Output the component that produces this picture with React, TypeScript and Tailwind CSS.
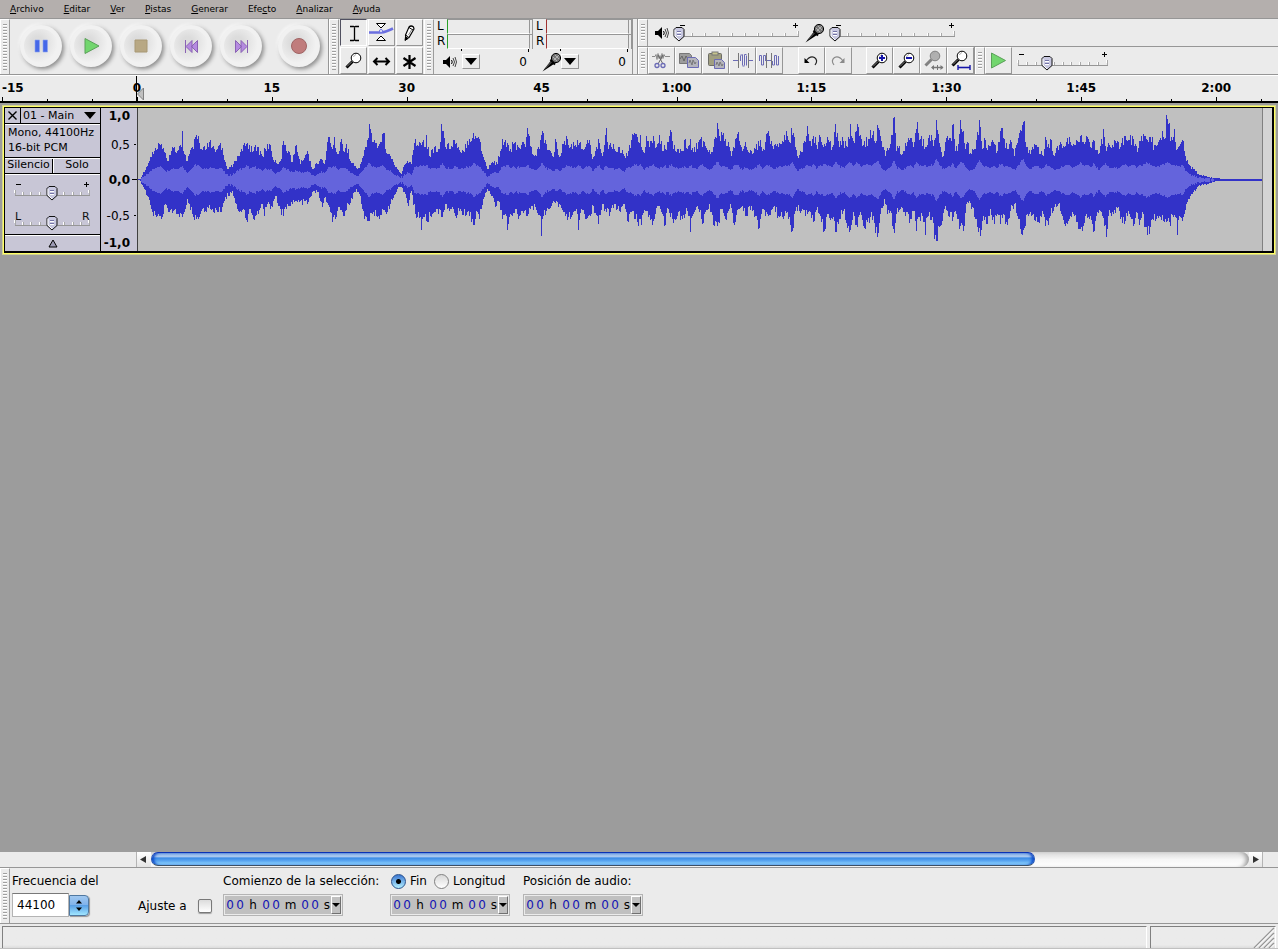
import type { ReactNode } from "react";

type Point = [number, number];

// Peak envelopes, three units per screen column, measured from the top of the strip at -24
const peaksTop: { start: number; points: Point[] }[] = [
  {
    start: -24,
    points: [
      [30, 236], [50, 195], [67, 155], [78, 148], [93, 130], [110, 180], [125, 140], [140, 150], [152, 140], [157, 90], [160, 150],
      [170, 180], [185, 140], [203, 105], [209, 145], [225, 148], [238, 125], [255, 155], [270, 127], [285, 185], [295, 205], [310, 190],
      [330, 155], [352, 127], [370, 150], [380, 140], [395, 165], [405, 145], [417, 130], [433, 185], [450, 180], [460, 120],
      [475, 150], [487, 185], [499, 132], [510, 190], [530, 150], [545, 205], [560, 190], [572, 175], [583, 190], [595, 110],
      [605, 145], [613, 108], [622, 160], [633, 115], [640, 150], [647, 130], [660, 180], [680, 205], [690, 190], [705, 140],
      [715, 112], [718, 69], [723, 97], [730, 125], [745, 135], [760, 97], [770, 160], [785, 175], [800, 205], [812, 220], [820, 200],
      [832, 180], [842, 190], [855, 115], [865, 135], [878, 118], [886, 140], [889, 102], [898, 165], [915, 135], [920, 155], [931, 125], [934, 69],
      [940, 92], [947, 145], [970, 118], [985, 140], [1000, 150], [1010, 120], [1030, 97], [1040, 112], [1050, 125],
      [1060, 170], [1070, 205], [1085, 185], [1100, 190], [1115, 115], [1125, 118],
    ],
  },
  {
    start: 1116,
    points: [
      [0, 145], [10, 130], [25, 140], [35, 125], [45, 140], [52, 82], [58, 105], [65, 160], [78, 165], [85, 140], [94, 102],
      [100, 97], [108, 130], [120, 150], [128, 170], [136, 115], [146, 170], [158, 130], [170, 115], [180, 140], [190, 125],
      [202, 118], [215, 145], [237, 118], [247, 175], [255, 150], [265, 115], [275, 165], [289, 82], [295, 145], [300, 127],
      [315, 150], [327, 140], [342, 165], [355, 150], [367, 100], [380, 110], [390, 102], [400, 155], [408, 105], [418, 140],
      [430, 105], [438, 140], [448, 103], [460, 150], [470, 125], [483, 95], [490, 145], [515, 150], [523, 118], [532, 145],
      [541, 115], [550, 155], [568, 118], [582, 125], [595, 155], [605, 155], [612, 115], [619, 112], [622, 66], [628, 105], [634, 94],
      [645, 115], [655, 125], [662, 165], [675, 115], [685, 94], [692, 140], [705, 125], [715, 155], [725, 160], [735, 145],
      [750, 118], [758, 145], [772, 98], [785, 135], [800, 130], [815, 120], [829, 90], [837, 125], [844, 82], [852, 110],
      [862, 165], [875, 155], [890, 76], [898, 120], [915, 110], [920, 145], [928, 103], [940, 140], [952, 108], [965, 140],
      [976, 69], [985, 120], [1000, 120], [1010, 140], [1019, 69], [1028, 120], [1038, 90], [1045, 79], [1055, 135],
      [1075, 115], [1090, 90], [1097, 120], [1102, 72], [1112, 120], [1125, 165],
    ],
  },
  {
    start: 2256,
    points: [
      [0, 130], [8, 52], [13, 48], [18, 150], [28, 135], [35, 160], [50, 125], [60, 112], [68, 140], [80, 64], [88, 118],
      [98, 115], [106, 140], [115, 112], [125, 118], [134, 112], [139, 58], [145, 100], [150, 140], [160, 165], [167, 112], [180, 112],
      [188, 69], [195, 150], [203, 130], [211, 58], [218, 90], [225, 145], [230, 125], [240, 158], [255, 145], [262, 95], [268, 58],
      [275, 145], [283, 112], [290, 148], [305, 118], [320, 150], [335, 82], [343, 115], [352, 145], [361, 118], [373, 165],
      [385, 112], [395, 72], [402, 60], [408, 140], [420, 160], [433, 130], [445, 140], [458, 165], [464, 108], [475, 130],
      [482, 118], [492, 165], [510, 125], [525, 135], [537, 108], [545, 135], [560, 120], [574, 102], [580, 125], [590, 108],
      [600, 140], [608, 118], [625, 160], [634, 115], [637, 130], [640, 84], [645, 135], [660, 140], [672, 118], [690, 140], [695, 112],
      [708, 118], [730, 115], [740, 155], [752, 106], [770, 118], [785, 110], [790, 148], [805, 125], [817, 92], [824, 112],
      [829, 42], [836, 68], [841, 120], [853, 85], [858, 148], [870, 130], [878, 120], [885, 165], [900, 195], [910, 205],
      [925, 220], [950, 228], [970, 232], [1005, 235], [1010, 237], [1120, 237],
    ],
  },
];

const peaksBottom: { start: number; points: Point[] }[] = [
  {
    start: -24,
    points: [
      [30, 240], [50, 285], [67, 335], [78, 348], [93, 355], [105, 310], [115, 335], [130, 330], [147, 350], [160, 340],
      [170, 295], [185, 340], [197, 355], [215, 325], [240, 325], [270, 335], [285, 290], [305, 272], [325, 330], [340, 325],
      [352, 365], [360, 325], [370, 355], [385, 340], [395, 310], [403, 347], [412, 310], [420, 325], [435, 285], [445, 315],
      [458, 347], [470, 310], [500, 305], [535, 305], [550, 272], [565, 275], [575, 320], [585, 290], [600, 335], [607, 365],
      [615, 355], [622, 330], [640, 345], [655, 310], [678, 265], [690, 285], [703, 355], [718, 362], [730, 335], [745, 345],
      [765, 335], [780, 310], [800, 265], [812, 260], [825, 280], [835, 315], [842, 270], [855, 340], [870, 350], [874, 388], [878, 350], [885, 340],
      [889, 362], [905, 340], [920, 325], [935, 350], [945, 310], [960, 325], [975, 345], [990, 325], [1005, 345], [1015, 330],
      [1029, 372], [1040, 335], [1048, 355], [1060, 295], [1072, 265], [1085, 285], [1095, 320], [1105, 300], [1115, 355],
      [1125, 340], [1132, 387],
    ],
  },
  {
    start: 1116,
    points: [
      [0, 340], [15, 325], [25, 355], [35, 330], [50, 345], [60, 325], [75, 320], [90, 345], [94, 407], [100, 345],
      [115, 325], [128, 300], [140, 305], [160, 335], [175, 350], [190, 335], [202, 340], [205, 387], [212, 325], [225, 355], [240, 345],
      [250, 315], [265, 370], [275, 310], [297, 345], [313, 310], [330, 335], [342, 310], [350, 360], [365, 330], [375, 355],
      [392, 372], [405, 330], [415, 350], [428, 362], [440, 315], [452, 335], [466, 372], [475, 325], [490, 368], [500, 345],
      [515, 355], [530, 330], [538, 345], [541, 395], [550, 340], [565, 325], [578, 368], [597, 310], [612, 375], [622, 377], [632, 325],
      [645, 355], [660, 310], [672, 372], [685, 325], [695, 315], [705, 345], [722, 315], [735, 345], [745, 384], [755, 325],
      [775, 345], [790, 320], [805, 345], [820, 355], [832, 335], [847, 392], [858, 320], [872, 330], [890, 340], [912, 362],
      [920, 320], [942, 392], [955, 340], [965, 355], [979, 395], [990, 355], [1000, 330], [1009, 368], [1021, 388],
      [1030, 335], [1042, 380], [1050, 335], [1058, 375], [1072, 365], [1090, 345], [1100, 410], [1110, 340], [1122, 295],
      [1130, 340],
    ],
  },
  {
    start: 2256,
    points: [
      [0, 330], [8, 385], [13, 398], [18, 340], [30, 325], [45, 345], [60, 355], [70, 330], [77, 392], [85, 350], [95, 345],
      [105, 403], [112, 350], [125, 350], [133, 415], [140, 422], [150, 375], [165, 315], [175, 345], [188, 350], [195, 330],
      [207, 384], [222, 375], [230, 305], [245, 320], [255, 355], [270, 407], [278, 345], [292, 370], [300, 325], [312, 370],
      [320, 340], [330, 370], [340, 340], [350, 372], [360, 330], [372, 310], [382, 345], [396, 403], [405, 375], [415, 345],
      [430, 340], [448, 368], [455, 330], [464, 375], [480, 345], [490, 330], [503, 310], [512, 340], [525, 375], [535, 360],
      [545, 335], [560, 365], [567, 385], [575, 390], [585, 345], [600, 345], [611, 392], [620, 335], [635, 345], [647, 410],
      [655, 345], [665, 335], [685, 320], [697, 368], [710, 345], [722, 355], [730, 375], [738, 335], [747, 372], [755, 335],
      [771, 403], [785, 355], [800, 345], [820, 360], [837, 365], [855, 350], [862, 403], [868, 345], [878, 350], [890, 305],
      [905, 280], [925, 255], [950, 250], [970, 243], [1005, 241], [1010, 240], [1120, 240],
    ],
  },
];

const COLUMNS = 1124;
const AXIS = 238;

const noise = (i: number) => {
  const n = Math.sin(i * 12.9898) * 43758.5453;
  return n - Math.floor(n);
};

const buildPeaks = (chunks: { start: number; points: Point[] }[], seed: number) => {
  const points = chunks.flatMap(({ start, points }) =>
    points.map(([x, y]): Point => [Math.round((x + start) / 3), Math.abs(y - AXIS) / 3])
  );
  const out: number[] = [];
  let k = 0;
  for (let x = 0; x < COLUMNS; x++) {
    while (k < points.length - 2 && points[k + 1][0] <= x) k++;
    const [x0, h0] = points[k];
    const [x1, h1] = points[k + 1];
    if (x < x0) {
      out.push(0.5);
      continue;
    }
    const t = x1 === x0 ? 0 : (x - x0) / (x1 - x0);
    const near = h1 > h0 ? t : 1 - t;
    const h = Math.min(h0, h1) + Math.abs(h1 - h0) * Math.pow(near, x1 - x0 > 3 ? 0.9 : 1.3);
    const jitter = t === 0 ? 1 : 1.12 - 0.28 * noise(x + seed);
    out.push(Math.max(0.5, Math.round(h * jitter)));
  }
  return out;
};

const up = buildPeaks(peaksTop, 7);
const down = buildPeaks(peaksBottom, 911);
const rms = up.map((_, i) => {
  let sum = 0;
  let count = 0;
  for (let j = Math.max(0, i - 1); j <= Math.min(COLUMNS - 1, i + 1); j++) {
    sum += up[j] + down[j];
    count += 2;
  }
  const mean = sum / count;
  return mean < 2 ? 0 : Math.round(mean * 0.37 + 2 * noise(i + 33) - 1);
});

const bars = (top: number[], bottom: number[]) =>
  top.map((h, i) => `M${i} ${71.5 - h}h1V${71.5 + bottom[i]}h-1z`).join("");

const peakPath = bars(up, down);
const rmsPath = bars(rms, rms);

const Waveform = () => (
  <svg
    viewBox="0 0 1124 143"
    preserveAspectRatio="none"
    shapeRendering="crispEdges"
    className="block w-full h-full"
    role="img"
    aria-label="Forma de onda 01 - Main"
  >
    <path d={peakPath} fill="#3232c8" />
    <path d={rmsPath} fill="#6464dc" />
  </svg>
);

const Grip = () => (
  <div className="w-[10px] shrink-0 self-stretch border-l border-t border-white border-r border-r-[#9c9c9c] px-[2px] py-1">
    <div className="h-full bg-[repeating-linear-gradient(to_bottom,#a0a0a0_0_1px,#ffffff_1px_2px,#ebebeb_2px_3px)]" />
  </div>
);

const Slider = ({
  label,
  width,
  end,
  steps,
  value,
  marks,
}: {
  label: string;
  width: number;
  end: number;
  steps: number;
  value: number;
  marks?: [string, string];
}) => {
  // Letter marks stand taller than the plus and minus signs
  const head = marks ? 5 : 0;
  return (
    <div className="relative shrink-0" style={{ width }}>
      <svg
        width={width}
        height={20 + head}
        viewBox={`0 ${-head} ${width} ${20 + head}`}
        className="block"
        shapeRendering="crispEdges"
      >
        {marks ? (
          <g fontFamily="DejaVu Sans, sans-serif" fontSize="11" fill="#111">
            <text x="6" y="8">{marks[0]}</text>
            <text x={end - 8} y="8">{marks[1]}</text>
          </g>
        ) : (
          <path d={`M7 2.5h5M${end - 6} 2.5h5M${end - 3.5} 0v5`} stroke="#000" fill="none" />
        )}
        <path d={`M6 13.5H${end}`} stroke="#969696" />
        {Array.from({ length: steps + 1 }, (_, i) => {
          const x = Math.round(6 + ((end - 7) * i) / steps) + 0.5;
          const tall = i === 0 || i === steps;
          return (
            <g key={i}>
              <path d={`M${x - 1} ${tall ? 8 : 10}v3`} stroke="#fff" />
              <path d={`M${x} ${tall ? 8 : 10}v${tall ? 5 : 3}`} stroke="#a8a8a8" />
            </g>
          );
        })}
        <g transform={`translate(${value} 4)`} shapeRendering="auto">
          <path d="M-3 .5h6l2 2v7l-5 4.5-5-4.5v-7z" fill="#c8c8e0" stroke="#111" />
          <path d="M-4 3v6l4 4" stroke="#fff" fill="none" />
          <path d="M-2 4.5h4M-2 7.5h4" stroke="#7474a8" />
          <path d="M-2 5.5h4M-2 8.5h4" stroke="#fff" />
        </g>
      </svg>
      <input
        type="range"
        aria-label={label}
        min={6}
        max={end}
        defaultValue={value}
        className="absolute inset-0 w-full h-full opacity-0"
      />
    </div>
  );
};

const ToolButton = ({ label, pressed, children }: { label: string; pressed?: boolean; children: ReactNode }) => (
  <button
    type="button"
    aria-label={label}
    aria-pressed={pressed}
    className={`w-[27px] h-[27px] shrink-0 border ${
      pressed
        ? "border-t-[#505060] border-l-[#505060] border-r-white border-b-white"
        : "border-t-white border-l-white border-r-[#969696] border-b-[#969696]"
    }`}
  >
    <svg width="25" height="25" viewBox="1 1 25 25" fill="none" stroke="#000">
      {children}
    </svg>
  </button>
);

const Speaker = () => (
  <svg width="14" height="14" viewBox="0 0 14 14" fill="none" stroke="#000">
    <path d="M0 5h3l4-4v12L3 9H0z" fill="#000" stroke="none" />
    <path d="M8.5 5q1.5 2 0 4" />
    <path d="M10 3q3 4 0 8M12 2q3 5 0 10" stroke="#444" />
  </svg>
);

const Mic = () => (
  <svg width="20" height="20" viewBox="0 0 20 20" fill="none">
    <path d="M0.5 19.5 9 8.5 12 12z" fill="#000" />
    <path d="M3 16.5 9.5 10" stroke="#777" />
    <path d="M8.5 7.5l4.5 5" stroke="#000" strokeWidth="2" />
    <circle cx="14" cy="6" r="4.6" fill="#777" stroke="#000" />
    <path d="M11 5l4 4M13 3l4 4M12 8l5-5" stroke="#ccc" strokeWidth=".7" />
  </svg>
);

const Lens = ({ fill = "#fff", stroke = "#000" }: { fill?: string; stroke?: string }) => (
  <>
    <path d="M6.5 20.5 12.5 14.5" stroke={stroke} strokeWidth="3" />
    <path d="M7 19.5 12 14.5" stroke="#888" />
    <circle cx="16" cy="11" r="4.8" fill={fill} stroke={stroke} />
    <path d="M13.5 10q.5-2 2.5-2.5" stroke="#aaa" />
  </>
);

const tools = [
  {
    label: "Selección",
    icon: <path d="M10 7.5h3.5l1 .5 1-.5H19M14.5 8v13M10 21.5h3.5l1-.5 1 .5H19" strokeWidth="1.3" />,
  },
  {
    label: "Envolvente",
    icon: (
      <>
        <path d="M1 13.5h12q5-.5 12-4" stroke="#6b6fe0" strokeWidth="2.6" />
        <path d="M8.5 4.5h9L13 9zM8.5 21.5h9L13 17z" fill="#fff" />
        <circle cx="13" cy="12" r="1.5" fill="#fff" stroke="#6b6fe0" />
      </>
    ),
  },
  {
    label: "Dibujo",
    icon: (
      <>
        <path d="M13 8q2-2 4.5 0l.5 2-5 8.500-3 1.500-.5-4z" fill="#fff" strokeWidth="1.2" />
        <path d="M13 8.500l4 2.500M9.500 16l3 2" />
        <path d="M15.500 11l-3 5" stroke="#888" />
        <path d="M9 21.500l.5-3.500 2.500 1.500z" fill="#000" />
      </>
    ),
  },
  {
    label: "Ampliación",
    icon: <Lens />,
  },
  {
    label: "Desplazamiento",
    icon: <path d="M6 14.5h15M9.5 11L6 14.5 9.5 18M17.5 11l3.5 3.5-3.5 3.5" strokeWidth="2" />,
  },
  {
    label: "Multiherramienta",
    icon: <path d="M13.5 8v14M7.5 11l12 8M19.5 11l-12 8" strokeWidth="2.2" />,
  },
];

const editButtons = [
  {
    label: "Cortar",
    icon: (
      <>
        <path d="M4 9.5h3l1-2 1 5 1-6 1 5 1-3 1 4 1-6 1 5 1-4 1 2h5" stroke="#8a8a8a" />
        <path d="M10 8l5 9M15 8l-5 9" stroke="#666" />
        <circle cx="9" cy="18.5" r="2" stroke="#6b6bb5" strokeWidth="1.3" />
        <circle cx="15" cy="18.5" r="2" stroke="#6b6bb5" strokeWidth="1.3" />
      </>
    ),
  },
  {
    label: "Copiar",
    icon: (
      <>
        <path d="M4.5 6.5h10l2 2v8h-12z" fill="#9c9c9c" stroke="#777" />
        <path d="M5 12l2-3 2 5 2-5 2 3" stroke="#666" />
        <path d="M12.5 10.5h8l3 3v7h-11z" fill="#b4b4bc" stroke="#6b6bb5" />
        <path d="M14 16l1-3 2 5 1-5 2 4 1-2" stroke="#777" />
      </>
    ),
  },
  {
    label: "Pegar",
    icon: (
      <>
        <rect x="6.5" y="6.5" width="13" height="12" rx="1" fill="#a09e80" stroke="#6d6d66" />
        <rect x="10" y="5" width="6" height="3" fill="#c6c48c" stroke="#777" />
        <path d="M12.5 12.5h7l3 3v6h-10z" fill="#b4b4bc" stroke="#6b6bb5" />
        <path d="M14 18l1-3 2 4 1-4 2 4 1-2" stroke="#777" />
      </>
    ),
  },
  {
    label: "Recortar",
    icon: (
      <>
        <path d="M4 13.5h5M19 13.5h5" stroke="#6b6bb5" />
        <path d="M9.5 6v15M19.5 6v15" stroke="#777" />
        <path d="M11.5 14V8.5M13.5 7.5v11M15.5 7.5v11M17.5 8.5v10M11.5 8h2M13.5 19h2M15.5 7.5h2" stroke="#6b6bb5" />
      </>
    ),
  },
  {
    label: "Silenciar",
    icon: (
      <>
        <path d="M3.5 14V8.5h2V18h2V8.5h2V14M16.5 14v4h2V8.5h2V18h2V9" stroke="#6b6bb5" />
        <path d="M10.5 6v15M15.5 6v15" stroke="#777" />
        <path d="M11 13.5h4" stroke="#6b6bb5" />
      </>
    ),
  },
];

const historyButtons = [
  {
    label: "Deshacer",
    icon: (
      <>
        <path d="M8 14q4-5.5 8.5-3.5 4 3 .5 7.5" stroke="#222" strokeWidth="1.2" />
        <path d="M6.5 11v5h5z" fill="#000" stroke="none" />
      </>
    ),
  },
  {
    label: "Rehacer",
    icon: (
      <>
        <path d="M18 14q-4-5.5-8.5-3.5-4 3-.5 7.5" stroke="#8a8a8a" strokeWidth="1.2" />
        <path d="M19.5 11v5h-5z" fill="#8a8a8a" stroke="none" />
      </>
    ),
  },
];

const zoomButtons = [
  {
    label: "Acercar",
    icon: (
      <>
        <Lens />
        <path d="M13 11h6M16 8v6" stroke="#1414a8" strokeWidth="2" />
      </>
    ),
  },
  {
    label: "Alejar",
    icon: (
      <>
        <Lens />
        <path d="M13 11h6" stroke="#1414a8" strokeWidth="2" />
      </>
    ),
  },
  {
    label: "Ajustar selección",
    icon: (
      <>
        <g transform="translate(-1 -2)">
          <Lens fill="#b0b0b0" stroke="#808080" />
        </g>
        <path d="M12 20.5h5M18 20.5h5" stroke="#777" strokeWidth="1.4" />
        <path d="M11 20.5l3-2.5v5zM23.5 20.5l-3-2.5v5z" fill="#777" stroke="none" />
        <path d="M17.5 18v5" stroke="#777" />
      </>
    ),
  },
  {
    label: "Ajustar proyecto",
    icon: (
      <>
        <g transform="translate(-1 -2)">
          <Lens />
        </g>
        <path d="M11 20.5h12" stroke="#1414a8" strokeWidth="1.6" />
        <path d="M11 18v5M23 18v5" stroke="#1414a8" strokeWidth="1.4" />
      </>
    ),
  },
];

const transport = [
  {
    label: "Pausa",
    icon: <path d="M4 4h4.500v12H4zM12 4h4.500v12H12z" fill="#4668e8" stroke="#8fa4f0" strokeWidth=".6" />,
  },
  {
    label: "Reproducir",
    icon: <path d="M4 2.5v15l14-7.5z" fill="#72d66e" stroke="#5aa058" />,
  },
  {
    label: "Parar",
    icon: <path d="M4 4h12v12H4z" fill="#b8a884" stroke="#a89874" />,
  },
  {
    label: "Ir al inicio",
    icon: <path d="M4.5 4v13M11 4.5v12L5 10.5zM16.5 4.5v12l-6-6z" fill="#b58ae0" stroke="#8a62b4" />,
  },
  {
    label: "Ir al final",
    icon: <path d="M16.5 4v13M10 4.5v12l6-6zM4.5 4.5v12l6-6z" fill="#b58ae0" stroke="#8a62b4" />,
  },
  {
    label: "Grabar",
    icon: <circle cx="10" cy="10" r="7.5" fill="#c07c7c" stroke="#a06464" />,
  },
];

const menus = [
  ["", "A", "rchivo"],
  ["", "E", "ditar"],
  ["", "V", "er"],
  ["", "P", "istas"],
  ["", "G", "enerar"],
  ["Efe", "c", "to"],
  ["", "A", "nalizar"],
  ["", "A", "yuda"],
];

const rulerLabels = ["-15", "0", "15", "30", "45", "1:00", "1:15", "1:30", "1:45", "2:00"];

const Meter = ({ label, mark, icon }: { label: string; mark: string; icon: ReactNode }) => (
  <div className="w-[99px] pl-[3px]">
    {["L", "R"].map((channel) => (
      <div key={channel} className="flex h-[15px] leading-[15px]">
        <span className="w-[10px]">{channel}</span>
        <div className={`w-[83px] border-t border-t-[#969696] border-l border-r border-r-[#969696] border-b border-b-white ${mark}`} />
        <div className="w-[3px] border-t border-t-[#969696] border-r border-r-[#969696]" />
      </div>
    ))}
    <div className="flex justify-between h-[3px] pl-[24px] pr-[4px]">
      <span className="w-px h-[2px] bg-black" />
      <span className="w-px bg-black" />
    </div>
    <div className="flex items-center h-[19px] pl-[6px]">
      <div className="w-[19px]">{icon}</div>
      <button
        type="button"
        aria-label={label}
        className="flex items-center justify-center w-[18px] h-[15px] border border-white border-r-[#969696] border-b-[#969696]"
      >
        <svg width="12" height="7" viewBox="0 0 12 7">
          <path d="M0 0h12L6 7z" fill="#000" />
        </svg>
      </button>
      <span className="flex-1 text-right pr-[6px]">0</span>
    </div>
  </div>
);

const TimeField = ({ label }: { label: string }) => (
  <div
    role="group"
    aria-label={label}
    className="flex items-center w-[120px] h-[22px] p-px border border-[#b4b4b4] bg-[#ebebeb]"
  >
    <div className="flex flex-1 items-center h-full bg-[#c0c0c0] text-center">
      <span className="w-[10px] text-[#1414b4]">0</span>
      <span className="w-[10px] text-[#1414b4]">0</span>
      <span className="w-[16px]">h</span>
      <span className="w-[10px] text-[#1414b4]">0</span>
      <span className="w-[10px] text-[#1414b4]">0</span>
      <span className="w-[19px]">m</span>
      <span className="w-[10px] text-[#1414b4]">0</span>
      <span className="w-[10px] text-[#1414b4]">0</span>
      <span className="w-[10px] text-right">s</span>
    </div>
    <button
      type="button"
      aria-label={`Formato de ${label}`}
      className="flex items-center justify-center w-[10px] h-full bg-[#c0c0c0] border border-t-white border-l-white border-r-[#707070] border-b-[#707070]"
    >
      <svg width="8" height="4" viewBox="0 0 8 4" className="shrink-0">
        <path d="M0 0h8L4 4z" fill="#000" />
      </svg>
    </button>
  </div>
);

const MenuBar = () => (
  <nav className="flex items-center h-[19px] bg-[#b4afad] border-b border-[#969696] text-[9px]">
    {menus.map(([before, key, after]) => (
      <button key={before + key + after} type="button" className="px-[10px] leading-4">
        {before}
        <span className="underline underline-offset-1">{key}</span>
        {after}
      </button>
    ))}
  </nav>
);

const Toolbars = () => (
  <div className="flex border-b border-[#969696]">
    {/* Transport */}
    <div className="flex h-[55px] border-r border-[#969696]">
      <Grip />
      <div className="flex items-center gap-2 pl-[10px] pr-2 pb-px">
        {transport.map((item) => (
          <button
            key={item.label}
            type="button"
            aria-label={item.label}
            className="flex items-center justify-center w-[42px] h-[42px] rounded-full bg-[#f1f1f1] shadow-[2px_2px_4px_#8c8c8c,-1px_-1px_3px_#ffffff] last:ml-2"
          >
            <span className="flex items-center justify-center w-[34px] h-[34px] rounded-full bg-radial-[at_40%_40%] from-[#dcdcdc] from-20% to-[#f1f1f1] to-70%">
              <svg width="20" height="20" viewBox="0 0 20 20">
                {item.icon}
              </svg>
            </span>
          </button>
        ))}
      </div>
    </div>

    {/* Tools */}
    <div className="flex">
      <Grip />
      <div className="grid grid-cols-3 gap-px px-px">
        {tools.map((tool, i) => (
          <ToolButton key={tool.label} label={tool.label} pressed={i === 0}>
            {tool.icon}
          </ToolButton>
        ))}
      </div>
    </div>

    {/* Meters */}
    <div className="flex border-r border-[#969696] text-[12px]">
      <Grip />
      <Meter label="Medidor de salida" mark="border-l-[#28a028]" icon={<Speaker />} />
      <Meter label="Medidor de entrada" mark="border-l-[#a03232]" icon={<Mic />} />
    </div>
    <div className="w-[5px] border-r border-[#969696]" />

    <div className="flex-1">
      {/* Mixer */}
      <div className="flex items-center h-[28px] border-b border-[#969696]">
        <Grip />
        <div className="flex items-center pl-[7px] gap-1">
          <Speaker />
          <Slider label="Volumen de salida" width={128} end={126} steps={9} value={6} />
          <Mic />
          <Slider label="Volumen de entrada" width={128} end={126} steps={9} value={6} />
        </div>
      </div>

      {/* Edit, zoom and playback speed */}
      <div className="flex h-[27px]">
        <Grip />
        {editButtons.map((b) => (
          <ToolButton key={b.label} label={b.label}>
            {b.icon}
          </ToolButton>
        ))}
        <div className="flex pl-[15px] pr-[14px]">
          {historyButtons.map((b) => (
            <ToolButton key={b.label} label={b.label}>
              {b.icon}
            </ToolButton>
          ))}
        </div>
        {zoomButtons.map((b) => (
          <ToolButton key={b.label} label={b.label}>
            {b.icon}
          </ToolButton>
        ))}
        <div className="w-px bg-[#969696]" />
        <Grip />
        <ToolButton label="Reproducir a velocidad">
          <path d="M6.5 6v15l14-7.5z" fill="#72d66e" stroke="#5aa058" />
        </ToolButton>
        <div className="pt-[5px]">
          <Slider label="Velocidad" width={100} end={96} steps={10} value={35} />
        </div>
      </div>
    </div>
  </div>
);

const Ruler = () => (
  <div className="flex h-[28px] pl-[2px] pr-4 border-t border-t-white border-b-2 border-b-black text-[12px] font-bold">
    {Array.from({ length: 28 }, (_, i) => (
      <div key={i} className="relative flex-1 flex flex-col justify-between items-start">
        <span className={`leading-4 pt-1 whitespace-nowrap ${i === 0 ? "" : "-translate-x-1/2"}`}>
          {i % 3 === 0 ? rulerLabels[i / 3] : ""}
        </span>
        <span className={`w-px bg-black ${i % 3 === 0 ? "h-1" : "h-[2px]"}`} />
        {i === 3 && (
          <svg width="8" height="25" viewBox="0 0 8 25" className="absolute -left-px top-0">
            <path d="M.5 0v25" stroke="#000" />
            <path d="M7.5 12v12L1.5 18z" fill="#c0c0c0" stroke="#808080" />
          </svg>
        )}
      </div>
    ))}
    <div className="flex items-end">
      <span className="w-px h-[2px] bg-black" />
    </div>
  </div>
);

const Track = () => (
  <section className="px-[2px] pt-[2px]">
    <div className="border border-[#d3d38f]">
      <div className="border border-[#ffff64]">
        <div className="flex h-[146px] border-t border-l border-r-2 border-b-2 border-black bg-[#d4d4d4]">
          {/* Control panel */}
          <div className="flex flex-col w-[95px] shrink-0 bg-[#c8c6d6] text-[11px]">
            <div className="flex h-[16px] border-b border-black">
              <button type="button" aria-label="Cerrar pista" className="flex items-center justify-center w-[16px] border-r border-black">
                <svg width="9" height="9" viewBox="0 0 9 9">
                  <path d="M.5.5l8 8M8.5.5l-8 8" stroke="#000" strokeWidth="1.4" />
                </svg>
              </button>
              <button type="button" className="flex flex-1 items-center justify-between pl-[2px] pr-1 leading-[14px] whitespace-nowrap">
                01 - Main
                <svg width="12" height="7" viewBox="0 0 12 7">
                  <path d="M0 0h12L6 7z" fill="#000" />
                </svg>
              </button>
            </div>
            <div className="h-[34px] pl-[3px] border-t border-t-white border-b border-b-black leading-[15px] whitespace-nowrap">
              Mono, 44100Hz
              <br />
              16-bit PCM
            </div>
            <div className="flex items-start h-[16px] border-t border-t-white border-b border-b-black">
              <button type="button" className="w-[48px] h-full pb-[2px] border-r border-black leading-[12px]">Silencio</button>
              <button type="button" className="flex-1 h-full pb-[2px] border-l border-white leading-[12px]">Solo</button>
            </div>
            <div className="flex flex-col flex-1 pt-[7px] pl-1 gap-[5px] border-t border-t-white border-b border-b-black">
              <Slider label="Ganancia" width={88} end={81} steps={9} value={43} />
              <Slider label="Panorámica" width={88} end={81} steps={9} value={43} marks={["L", "R"]} />
            </div>
            <button type="button" aria-label="Contraer" className="flex items-center justify-center h-[16px] border-t border-white">
              <svg width="10" height="9" viewBox="0 0 10 9">
                <path d="M5 1L9 8H1z" fill="#9c9ab4" stroke="#000" />
              </svg>
            </button>
          </div>

          {/* Amplitude scale */}
          <div className="flex w-[37px] shrink-0 border-l border-black bg-[#c8c6d6] text-[12px] leading-4 text-right">
            <div className="flex flex-col w-[29px]">
              <span className="font-bold">1,0</span>
              <span className="mt-[13px]">0,5</span>
              <span className="mt-[19px] font-bold">0,0</span>
              <span className="mt-5">-0,5</span>
              <span className="mt-[11px] font-bold">-1,0</span>
            </div>
            <svg width="7" height="143" viewBox="0 0 7 143" stroke="#000">
              <path d="M4 36.5h2M2 71.5h5M4 107.5h2" />
            </svg>
          </div>
          <div className="flex-1 min-w-0 border-l border-l-[#404040] border-r border-r-[#808080] bg-[#c0c0c0]">
            <Waveform />
          </div>
          <div className="w-[9px]" />
        </div>
      </div>
    </div>
  </section>
);

const ScrollBar = () => (
  <div className="flex h-[16px] border-b border-[#969696] bg-[#ebebeb]">
    <div className="w-[137px] border-r border-[#b4b4b4]" />
    <button type="button" aria-label="Desplazar a la izquierda" className="flex items-center justify-center w-[14px] pr-[2px] bg-linear-to-b from-white to-[#e4e4e4]">
      <svg width="6" height="7" viewBox="0 0 6 7">
        <path d="M6 0v7L0 3.5z" fill="#333" />
      </svg>
    </button>
    <div className="flex-1 rounded-r-full bg-linear-to-b from-[#d8d8d8] via-[#f6f6f6] to-white shadow-[inset_-5px_0_4px_-2px_#a0a0a0]">
      <div className="w-[80.5%] h-[14px] rounded-full border border-t-[#0a32b4] border-x-[#1e50b4] border-b-[#3c5064] bg-[linear-gradient(to_bottom,#8cb4e6_0%,#a8c8f0_30%,#3c8ce6_42%,#5aa5f0_65%,#96dcff_100%)] shadow-[inset_3px_0_3px_-1px_#0a46c8,inset_-3px_0_3px_-1px_#0a46c8]" />
    </div>
    <button type="button" aria-label="Desplazar a la derecha" className="flex items-center justify-center w-[14px] border-r border-[#b4b4b4] bg-linear-to-b from-white to-[#e4e4e4]">
      <svg width="6" height="7" viewBox="0 0 6 7">
        <path d="M0 0v7l6-3.5z" fill="#333" />
      </svg>
    </button>
    <div className="w-[15px]" />
  </div>
);

const radioClass =
  "appearance-none w-[15px] h-[15px] rounded-full border border-[#808080] bg-linear-to-b from-[#d8d8d8] to-white checked:border-[#28508c] checked:bg-[radial-gradient(circle_at_50%_50%,#000_0_2px,transparent_3px),linear-gradient(to_bottom,#3c78d2,#b4f0ff)]";

const SelectionBar = () => (
  <div className="flex h-[56px] border-b border-[#969696] text-[12px] leading-4">
    <Grip />
    <div className="flex flex-col w-[126px] pl-[2px] pt-[5px]">
      <label htmlFor="rate">Frecuencia del</label>
      <div className="flex items-center pt-1">
        <input
          id="rate"
          type="text"
          defaultValue="44100"
          className="w-[57px] h-[24px] pl-1 bg-white border border-[#b4b4b4] border-t-[#787878]"
        />
        <button
          type="button"
          aria-label="Elegir frecuencia"
          className="flex items-center justify-center w-[20px] h-[21px] rounded-r-[4px] border border-[#5078a0] bg-[linear-gradient(to_bottom,#a0c8f0_0%,#82b4eb_45%,#5aa0e6_50%,#a0e6ff_100%)] shadow-[1px_1px_1px_#969696]"
        >
          <svg width="6" height="11" viewBox="0 0 6 11">
            <path d="M3 0l3 3.5H0zM3 11L0 7.5h6z" fill="#000" />
          </svg>
        </button>
      </div>
    </div>
    <div className="flex items-end w-[87px] pl-[2px] pb-[9px] gap-2">
      <label htmlFor="snap" className="w-[52px] whitespace-nowrap">Ajuste a</label>
      <input
        id="snap"
        type="checkbox"
        className="appearance-none w-[14px] h-[14px] mb-px rounded-[2px] border border-[#787878] bg-linear-to-b from-[#dcdcdc] to-white shadow-[0_1px_1px_#a0a0a0]"
      />
    </div>
    <div className="flex flex-col w-[167px] pt-[5px] gap-[5px] whitespace-nowrap">
      <span>Comienzo de la selección:</span>
      <TimeField label="Comienzo de la selección" />
    </div>
    <div className="flex flex-col w-[133px] pt-[5px] gap-[5px] whitespace-nowrap">
      <div className="flex items-center h-4">
        <label className="flex items-center gap-1 w-[44px] pl-px">
          <input type="radio" name="range" defaultChecked className={radioClass} />
          Fin
        </label>
        <label className="flex items-center gap-1">
          <input type="radio" name="range" className={radioClass} />
          Longitud
        </label>
      </div>
      <TimeField label="Fin de la selección" />
    </div>
    <div className="flex flex-col pt-[5px] gap-[5px] whitespace-nowrap">
      <span>Posición de audio:</span>
      <TimeField label="Posición de audio" />
    </div>
  </div>
);

const StatusBar = () => (
  <footer className="flex h-[25px] pt-[2px] pl-[2px] pr-[2px] gap-[3px] border-b border-[#c0c0c0]">
    <div className="flex-1 border-t border-l border-[#808080] border-r border-r-white bg-linear-to-b from-[#ebebeb] from-85% to-[#dcdcdc]" />
    <div className="flex justify-end items-end w-[126px] border-t border-l border-[#808080] border-r border-r-white bg-linear-to-b from-[#ebebeb] from-85% to-[#dcdcdc]">
      <svg width="22" height="21" viewBox="0 0 22 21">
        <path d="M1 21L21 1M6 21L21 6M11 21L21 11M16 21l5-5" stroke="#969696" strokeWidth="1.4" />
        <path d="M2.5 21L21 2.5M7.5 21L21 7.5M12.5 21l8.5-8.5M17.5 21l3.5-3.5" stroke="#fff" />
      </svg>
    </div>
  </footer>
);

const App = () => {
  return (
    <div className="flex flex-col min-h-screen bg-[#ebebeb] text-black font-['DejaVu_Sans',sans-serif]">
      <MenuBar />
      <Toolbars />
      <Ruler />
      <main className="flex-1 bg-[#9c9c9c]">
        <Track />
      </main>
      <ScrollBar />
      <SelectionBar />
      <StatusBar />
    </div>
  );
};

export default App;
